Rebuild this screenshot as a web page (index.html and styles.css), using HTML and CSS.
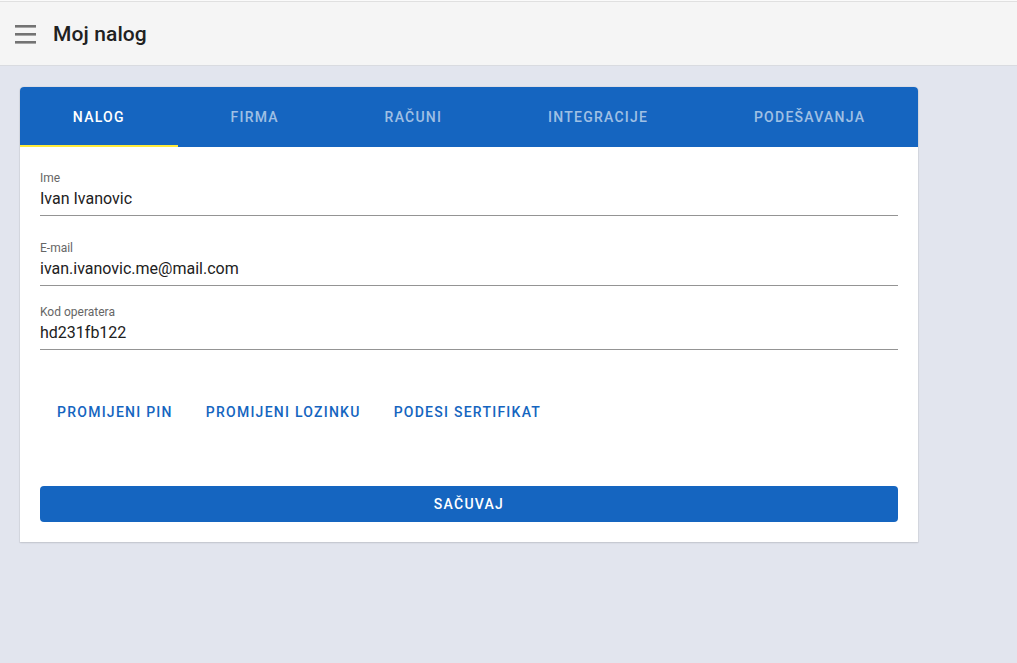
FILE: index.html
```html
<!DOCTYPE html>
<html lang="sr">
<head>
<meta charset="utf-8">
<title>Moj nalog</title>
<link rel="stylesheet" href="styles.css">
</head>
<body>
<div class="app">
  <header class="topbar">
    <button class="menu-btn" aria-label="Meni">
      <svg width="21" height="19" viewBox="0 0 21 19"><rect x="0" y="0" width="21" height="2.6" fill="#737373"/><rect x="0" y="8" width="21" height="2.6" fill="#737373"/><rect x="0" y="16" width="21" height="2.6" fill="#737373"/></svg>
    </button>
    <h1 class="title">Moj nalog</h1>
  </header>
  <main class="main">
    <section class="card">
      <nav class="tabs">
        <a class="tab active">NALOG</a>
        <a class="tab">FIRMA</a>
        <a class="tab">RAČUNI</a>
        <a class="tab">INTEGRACIJE</a>
        <a class="tab">PODEŠAVANJA</a>
      </nav>
      <div class="content">
        <div class="field field-first">
          <div class="label">Ime</div>
          <div class="value">Ivan Ivanovic</div>
        </div>
        <div class="field field-second">
          <div class="label">E-mail</div>
          <div class="value">ivan.ivanovic.me@mail.com</div>
        </div>
        <div class="field field-last">
          <div class="label">Kod operatera</div>
          <div class="value">hd231fb122</div>
        </div>
        <div class="actions">
          <button class="text-btn">PROMIJENI PIN</button>
          <button class="text-btn">PROMIJENI LOZINKU</button>
          <button class="text-btn">PODESI SERTIFIKAT</button>
        </div>
        <button class="save-btn">SAČUVAJ</button>
      </div>
    </section>
  </main>
</div>
</body>
</html>
```
FILE: styles.css
```css
* { box-sizing: border-box; }
html, body { margin: 0; padding: 0; }
body {
  font-family: Roboto, "Noto Sans", "Liberation Sans", sans-serif;
  background: #e2e5ee;
  width: 1017px;
  height: 663px;
  overflow: hidden;
}
.app { padding-top: 1px; background: #fafafa; }
.topbar {
  display: flex;
  align-items: center;
  height: 65px;
  background: #f5f5f5;
  border-top: 1px solid #e0e0e0;
  border-bottom: 1px solid #d9dbe0;
  padding: 0 0 0 15px;
}
.menu-btn {
  border: 0;
  background: transparent;
  padding: 0;
  width: 21px;
  height: 19px;
  display: flex;
  margin-top: 1px;
}
.title {
  margin: 0 0 0 17px;
  font-size: 21px;
  font-weight: 500;
  color: #212121;
  letter-spacing: 0.1px;
}
.main {
  background: #e2e5ee;
  padding: 21px 0 0 20px;
  height: 596px;
}
.card {
  width: 898px;
  background: #fff;
  border-radius: 4px 4px 0 0;
  box-shadow: 0 1px 2px rgba(0,0,0,0.12), 0 0 0 1px rgba(0,0,0,0.03);
}
.tabs {
  display: flex;
  height: 60px;
  background: #1565c0;
  border-radius: 4px 4px 0 0;
}
.tab {
  flex: 1 1 auto;
  display: flex;
  align-items: center;
  justify-content: center;
  padding: 2px 16px 0;
  font-size: 14px;
  font-weight: 500;
  letter-spacing: 1.25px;
  color: rgba(255,255,255,0.6);
  border-bottom: 2px solid transparent;
}
.tab.active {
  color: #fff;
  border-bottom-color: #ffeb3b;
}
.content { padding: 23px 20px 20px; }
.field {
  border-bottom: 1px solid #949494;
  padding-bottom: 4px;
}
.field-first { margin-bottom: 24px; }
.field-second { margin-bottom: 18px; }
.field-last { margin-bottom: 0; }
.label {
  font-size: 12px;
  line-height: 17px;
  color: #666;
}
.value {
  font-size: 16px;
  line-height: 24px;
  color: #212121;
}
.actions {
  display: flex;
  gap: 1px;
  margin-top: 44px;
  padding-left: 1px;
}
.text-btn {
  border: 0;
  background: transparent;
  height: 36px;
  padding: 0 16px;
  font-family: inherit;
  font-size: 14px;
  font-weight: 500;
  letter-spacing: 1.25px;
  color: #1565c0;
}
.save-btn {
  display: block;
  width: 100%;
  height: 36px;
  margin-top: 56px;
  border: 0;
  border-radius: 4px;
  background: #1565c0;
  color: #fff;
  font-family: inherit;
  font-size: 14px;
  font-weight: 500;
  letter-spacing: 1.25px;
}
```
